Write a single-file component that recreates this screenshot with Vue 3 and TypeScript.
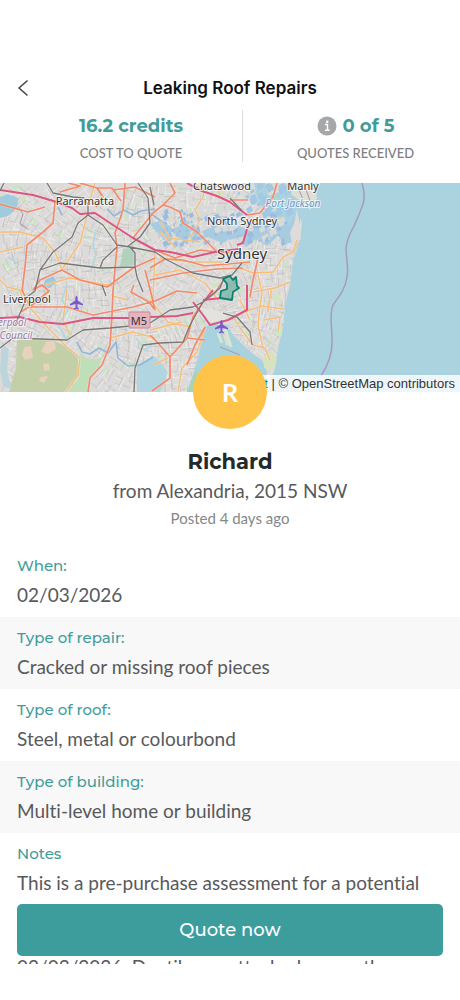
<script setup lang="ts">
interface Answer {
  label: string
  value: string
}
interface Road {
  kind: string
  d: string
}

const answers: Answer[] = [
  { label: 'When:', value: '02/03/2026' },
  { label: 'Type of repair:', value: 'Cracked or missing roof pieces' },
  { label: 'Type of roof:', value: 'Steel, metal or colourbond' },
  { label: 'Type of building:', value: 'Multi-level home or building' },
]

const noteLines: string[] = [
  'This is a pre-purchase assessment for a potential',
  '',
  '',
  '02/03/2026. Dentil runs attached across the',
]

let seed = 11
function rand(): number {
  seed = (seed * 16807) % 2147483647
  return seed / 2147483647
}

// Minor streets: short segments that turn slightly from block to block.
function makeStreets(): string {
  let d = ''
  for (let y = 185; y < 392; y += 7) {
    for (let x = 2; x < 300; x += 7) {
      const a = Math.sin(x / 37) * 0.5 + Math.cos(y / 29) * 0.5 + (rand() > 0.5 ? Math.PI / 2 : 0)
      const len = 4 + rand() * 8
      const px = x + rand() * 5
      const py = y + rand() * 5
      d += `M${px.toFixed(1)} ${py.toFixed(1)}l${(Math.cos(a) * len).toFixed(1)} ${(Math.sin(a) * len).toFixed(1)}`
    }
  }
  return d
}

function makeSpecks(count: number, x0: number, y0: number, w: number, h: number, size: number): string {
  let d = ''
  for (let i = 0; i < count; i++) {
    const x = x0 + rand() * w
    const y = y0 + rand() * h
    const s = 1 + rand() * size
    d += `M${x.toFixed(1)} ${y.toFixed(1)}l${s.toFixed(1)} ${(-s * 0.6).toFixed(1)} ${(s * 0.4).toFixed(1)} ${s.toFixed(1)}-${s.toFixed(1)} ${(s * 0.6).toFixed(1)}z`
  }
  return d
}

const streetsPale = makeStreets()
const streets = makeStreets()
const parks = makeSpecks(170, 0, 185, 285, 200, 4)
const harbourLand = makeSpecks(70, 165, 205, 120, 36, 6)
const inlets = makeSpecks(90, 160, 210, 125, 34, 4)
const northInlets = makeSpecks(40, 235, 184, 55, 30, 6)

const roads: Road[] = [
  { kind: 'minor', d: 'M0 232L20 232 43 238 55 252 62 270M87 215L80 243 63 268M0 280L7 287 20 290 24 305M83 183L75 190M205 183L203 197 195 210 200 220 190 238M297 240L293 252 283 257 273 272 253 273 240 268M155 275L180 270 205 283 218 300M155 250L153 300M150 300L168 322 190 327M30 308L50 330 67 347 80 358 78 375 67 391M67 290L63 320 70 335M110 338L133 332 155 338M205 328L197 352 182 368 178 391M232 315L240 328 253 345 265 348 270 360M260 305L258 325 263 348M264 320L280 317 278 332M247 311L262 306 284 309M253 292L275 288 290 282M258 275L262 292 260 307M150 330L182 322M160 222L170 238 200 242M215 183L220 195M250 220L263 224 280 218M95 183L90 200M0 252L23 247M45 285L70 278 112 286M271 290L268 312M240 300L250 320M160 232L175 247M160 258L190 262 222 262M153 365L168 358M128 300L112 296' },
  { kind: 'major', d: 'M0 204L28 212 45 207M55 202L53 223 43 232 27 245 25 267 22 291M125 183L123 210 115 233 117 247 113 291 112 315 110 345 102 365 90 378 88 392M33 290L40 280 62 270 80 280 107 287 133 268 155 258M80 183L97 188 103 197 96 207M113 190L135 187 155 197M97 188L112 188 121 201M60 192L80 186 68 183M170 183L175 193 163 205 153 213 133 238M170 207L180 212 183 223 197 232 210 245 217 252M163 205L170 207M277 183L273 197 260 213 247 215M150 268L165 259 183 260 205 266 250 262M150 280L183 273 217 269 243 268M155 250L175 258 200 250 217 252 242 254M225 278L215 293 203 302 193 317 187 338 170 357 170 378 152 391M150 335L158 343 170 357M187 338L205 340M205 327L195 345 187 365M22 290L30 307 67 307 93 315 133 307 155 301 177 291 197 293M155 310L149 302 131 292 134 285M33 290L42 285 49 291 31 306M30 306L21 312M145 270L149 285 155 310M258 258L253 280 250 297M230 200L248 200' },
  { kind: 'motorway', d: 'M0 190L33 195 57 202 72 208 80 214 95 213 113 225 133 238 155 250 170 252 193 257 215 252 239 249M187 183L202 191 217 196 230 202 247 215M219 190L228 185M247 229L243 243 237 245M0 318L20 317 40 322 63 324 93 318 128 318 150 317 177 316 193 313M193 302L203 315 210 325 228 320 247 310 247 285M203 300L222 298M213 290L205 300' },
  { kind: 'rail', d: 'M47 183L53 193 73 197 84 198 88 205 88 215 78 223 72 237 53 252 40 270 35 291 27 297 15 325M88 215L103 225 117 245 130 247 155 252 167 260 193 273 220 278 232 275 242 263M40 270L60 263 100 268 135 267 135 253 130 247M100 268L103 260 117 247M135 267L137 277 143 292M138 183L148 198 150 223 140 237 127 247M230 198L242 211M0 348L13 338 67 340 83 330 110 328 130 326 150 323 170 310 193 307 203 302 220 288 224 278M203 302L190 325 183 342 160 343 143 345 135 368 134 392M223 313L237 317 250 332 252 345M102 285L106 296M0 191L4 183M150 187L154 205' },
]
</script>

<template>
  <div class="screen">
    <header class="top">
      <div class="title-bar">
        <button class="back" type="button" aria-label="Back">
          <svg width="12" height="18" viewBox="0 0 12 18" fill="none"><path d="M10.5 1.5L2 9l8.500 7.500" stroke="#444" stroke-width="1.500" /></svg>
        </button>
        <h1>Leaking Roof Repairs</h1>
      </div>
      <div class="stats">
        <div class="stat">
          <strong>16.2 credits</strong>
          <span>COST TO QUOTE</span>
        </div>
        <div class="stat">
          <strong>
            <svg class="info" width="20" height="20" viewBox="0 0 20 20"><circle cx="10" cy="10" r="9.500" fill="#a5a7a9" /><circle cx="10.200" cy="5.700" r="1.300" fill="#fff" /><path d="M8 8.500h2.500v5.500M8 14.300h4.600" fill="none" stroke="#fff" stroke-width="1.400" /></svg>
            0 of 5
          </strong>
          <span>QUOTES RECEIVED</span>
        </div>
      </div>
    </header>

    <section class="map" aria-label="Map of Sydney">
      <svg class="tiles" viewBox="0 183 460 209" preserveAspectRatio="xMidYMid slice">
        <rect y="183" width="460" height="209" fill="#dcdbd9" />
        <path :d="parks" fill="#c9e6c2" />
        <path :d="streetsPale" class="street-pale" />
        <path :d="streets" class="street" />

        <path d="M0 197L8 194 18 198 17 208 8 216 0 218z" fill="#a0cbdc" />
        <path d="M18 207L23 214 20 224 28 229" class="council" />
        <path d="M123 249L133 248 135 265 120 267z" fill="#b0d2bd" />
        <path d="M17 340L53 340 67 347 78 358 79 375 64 392 9 392 16 368z" fill="#c2cfa7" />
        <path d="M46 342L54 340 56 349 48 354 41 352zM24 347L31 346 33 358 25 360 22 355zM43 364L49 363 50 370 44 371zM41 377L48 376 44 383 39 381z" fill="#e9d2bd" />
        <path d="M80 354L90 360 102 358 98 370 89 378 87 392 68 392 79 378z" fill="#bedfb9" />
        <path d="M2 342L9 350 7 370 12 390 3 386 0 370z" fill="#bcd5dc" />
        <path d="M45 280L53 276 57 282 50 288 43 287z" fill="#9ac9dd" />
        <path d="M137 365L155 356 168 372 160 392 137 392z" fill="#b1d5e1" />
        <path d="M95 233L93 245 96 255 91 270M67 285L62 300 68 310 58 325 66 338M8 257L18 264M136 338L145 350 152 345" class="creek-pale" />
        <path d="M107 209L114 216 124 210 133 215 141 211 155 209M77 342L82 352 90 354 99 348 108 353 116 342 118 358 128 366 140 365 153 357M58 207L62 215M150 213L165 224" class="creek" />

        <path d="M150 224L162 220 173 229 188 221 201 232 214 224 230 232 239 226 252 232 258 222 270 225 276 214 286 218 300 206V240L286 244 278 236 267 246 256 239 246 247 236 238 222 243 208 237 192 243 176 237 164 240 157 232z" fill="#a7cbdf" />
        <path d="M254 183L265 183 268 196 279 192 288 183H460V392H267L275 368 278 348 283 328 285 305 290 285 293 260 300 242 302 222 297 211 290 226 272 219 262 208 257 198z" fill="#aad3df" />
        <path :d="harbourLand" fill="#d8dad7" />
        <path :d="inlets" fill="#9bbce2" />
        <path :d="northInlets" fill="#a3c8e3" />
        <path d="M288 183L315 183 317 198 310 210 302 202 292 195z" fill="#e0dfd5" />
        <path d="M297 209L300 225 301 239 292 244 290 232 294 224z" fill="#dddcda" />
        <path d="M205 327L214 322 220 326 226 345 231 346 225 323 233 335 250 352 262 360 267 372 262 392H187L197 362z" fill="#a9d2df" />
        <path d="M195 372L187 392H205V376z" fill="#a7d4b1" />
        <path d="M218 333L222 343M225 328L231 347" stroke="#d5e8cf" stroke-width="3" />
        <path d="M201 308L212 309 227 314 225 320 211 323z" fill="#e3e2dc" />
        <path d="M264 356L272 350 277 359 274 370 264 368z" fill="#d7e3be" />
        <path d="M273 294h7v8h-6zM277 327h5v9h-6zM216 192h7v5h-7zM270 200h8v6h-8z" fill="#cfe6c0" />
        <path d="M220 347L240 355M305 187L312 206M298 188L303 199" class="council" />

        <path v-for="road in roads" :key="road.kind + '-edge'" :class="['edge', road.kind]" :d="road.d" />
        <path v-for="road in roads" :key="road.kind" :class="['road', road.kind]" :d="road.d" />

        <path d="M362 183C364 190 365 198 363 204C360 213 357 219 354 226C350 233 347 239 346 248C346 258 349 268 347 277C345 290 339 296 333 305C329 314 332 326 332 339C333 354 328 365 321 376" class="border" />
        <path d="M223 279L230 276 233 280 236 277 237 286 239 288 233 292 232 300 220 298 221 291 227 289 227 284z" class="suburb" />

        <g fill="#7a58d0">
          <path id="plane" d="M76.500 296C77.800 296 77.800 299 77.700 300.500L83 304V305.500L77.600 304 77.300 307 79 308.500V309.500L76.500 308.800 74 309.500V308.500L75.700 307 75.400 304 70 305.500V304L75.300 300.500C75.200 299 75.200 296 76.500 296z" />
          <use href="#plane" x="145" y="24" />
        </g>

        <rect x="129" y="312" width="21" height="16" rx="1" fill="#e7b3bd" stroke="#c98898" stroke-width="1" />
        <g class="place">
          <text x="139" y="325" class="shield">M5</text>
          <text x="85" y="205" font-size="11">Parramatta</text>
          <text x="222" y="190" font-size="11">Chatswood</text>
          <text x="303" y="190" font-size="11">Manly</text>
          <text x="242" y="225" font-size="11">North Sydney</text>
          <text x="242" y="259" font-size="15">Sydney</text>
          <text x="27" y="303" font-size="11">Liverpool</text>
          <text x="293" y="207" class="water-name">Port Jackson</text>
          <text x="12" y="326" class="council-name">erpool</text>
          <text x="16" y="339" class="council-name">Council</text>
        </g>
      </svg>
      <p class="credit"><a href="#leaflet">Leaflet</a> | © OpenStreetMap contributors</p>
      <div class="avatar">R</div>
    </section>

    <section class="person">
      <h2>Richard</h2>
      <p class="from">from Alexandria, 2015 NSW</p>
      <p class="posted">Posted 4 days ago</p>
    </section>

    <dl class="answers">
      <div v-for="item in answers" :key="item.label" class="answer">
        <dt>{{ item.label }}</dt>
        <dd>{{ item.value }}</dd>
      </div>
      <div class="answer notes">
        <dt>Notes</dt>
        <dd><span v-for="(line, i) in noteLines" :key="i">{{ line }}</span></dd>
      </div>
    </dl>

    <footer class="action">
      <button type="button">Quote now</button>
    </footer>
  </div>
</template>

<style>
body {
  background: #fff;
}
</style>

<style scoped>
.screen {
  display: flex;
  flex-direction: column;
  height: 100vh;
  box-sizing: border-box;
  padding-bottom: 36px;
  position: relative;
  overflow: hidden;
  background: #fff;
  color: #58595b;
  font-family: Lato, "Open Sans", sans-serif;
  font-variant-ligatures: none;
}
h1, h2, p, dl, dd {
  margin: 0;
}
button {
  font: inherit;
  border: 0;
  cursor: pointer;
}
.top {
  flex: none;
  padding-top: 72px;
  height: 111px;
}
.title-bar {
  display: grid;
  grid-template-columns: 46px 1fr 46px;
  align-items: center;
  height: 32px;
}
.back {
  display: flex;
  justify-content: center;
  padding: 0;
  background: none;
}
h1 {
  text-align: center;
  font: 600 17px/24px Inter, sans-serif;
  color: #111;
}
.stats {
  display: grid;
  grid-template-columns: 1fr 1fr;
  margin-top: 6px;
  padding-left: 24px;
}
.stat {
  display: flex;
  flex-direction: column;
  align-items: center;
  height: 52px;
}
.stat:first-child {
  padding-right: 4px;
}
.stat + .stat {
  border-left: 1px solid #ddd;
  padding-left: 8px;
}
.stat strong {
  display: flex;
  align-items: center;
  gap: 6px;
  font: 700 18px/32px Montserrat, Inter, sans-serif;
  color: #3f9c9b;
}
.stat span {
  font-size: 13px;
  font-weight: 500;
  line-height: 22px;
  color: #7c7e80;
}
.map {
  flex: none;
  position: relative;
  height: 209px;
}
.tiles {
  display: block;
  width: 100%;
  height: 100%;
}
.tiles path {
  stroke-linejoin: round;
}
.street, .street-pale {
  fill: none;
  stroke: #bcbbba;
  stroke-width: 0.6;
}
.street-pale {
  stroke: #efeeed;
  stroke-width: 0.8;
}
.creek, .creek-pale {
  fill: none;
  stroke: #8db8da;
  stroke-width: 1.6;
}
.creek-pale {
  stroke: #aed7df;
}
.council {
  fill: none;
  stroke: #a795b3;
  stroke-width: 1;
}
.border {
  fill: none;
  stroke: #a49abd;
  stroke-width: 1.5;
}
.suburb {
  fill: #27967c;
  fill-opacity: 0.45;
  stroke: #0c8172;
  stroke-width: 1.8;
}
.road, .edge {
  fill: none;
}
.road.minor { stroke: #f8bd76; stroke-width: 1.4; }
.road.major { stroke: #f38a69; stroke-width: 1.7; }
.road.motorway { stroke: #dc5580; stroke-width: 2; }
.road.rail { stroke: #777; stroke-width: 1.3; }
.edge { stroke: #fff; stroke-opacity: 0.25; stroke-width: 3; }
.place text {
  font-family: "Noto Sans", sans-serif;
  text-anchor: middle;
  fill: #333;
  stroke: #fff;
  stroke-opacity: 0.7;
  stroke-width: 2;
  paint-order: stroke;
}
.place .shield {
  font-size: 11px;
  stroke: none;
}
.place .water-name {
  font-size: 10px;
  font-style: italic;
  fill: #6c93c4;
}
.place .council-name {
  font-size: 10px;
  font-style: italic;
  fill: #967ba5;
}
.credit {
  position: absolute;
  right: 0;
  bottom: 0;
  padding: 0 5px;
  background: rgba(255, 255, 255, 0.8);
  font: 13px/17px "Liberation Sans", Arial, sans-serif;
  color: #333;
}
.credit a {
  color: #0078a8;
  text-decoration: none;
}
.avatar {
  position: absolute;
  left: 50%;
  top: 172px;
  transform: translateX(-50%);
  width: 74px;
  height: 74px;
  border-radius: 50%;
  background: #fec44a;
  color: #fff;
  font-size: 25px;
  font-weight: 700;
  line-height: 74px;
  text-align: center;
}
.person {
  flex: none;
  padding-top: 56px;
  text-align: center;
}
h2 {
  font: 700 21px/28px Montserrat, Inter, sans-serif;
  color: #222b2b;
}
.from {
  font-size: 19px;
  line-height: 30px;
}
.posted {
  font-size: 15px;
  line-height: 24px;
  color: #858789;
}
.answers {
  flex: 1;
  min-height: 0;
  margin-top: 15px;
  overflow: hidden;
}
.answer {
  box-sizing: border-box;
  height: 72px;
  padding: 8px 17px 0;
}
.answer:nth-child(even) {
  background: #f8f8f8;
}
.answer.notes {
  height: auto;
}
dt {
  font: 500 15px/26px Montserrat, Inter, sans-serif;
  color: #3f9c9b;
}
dd {
  font-size: 19px;
  line-height: 28px;
  padding-top: 2px;
}
dd span {
  display: block;
  min-height: 28px;
  white-space: nowrap;
}
.action {
  position: absolute;
  left: 17px;
  right: 17px;
  bottom: 44px;
  display: flex;
}
.action button {
  flex: 1;
  height: 52px;
  border-radius: 5px;
  background: #3d9d9d;
  color: #fff;
  font: 500 18px/26px Montserrat, Inter, sans-serif;
}
</style>
